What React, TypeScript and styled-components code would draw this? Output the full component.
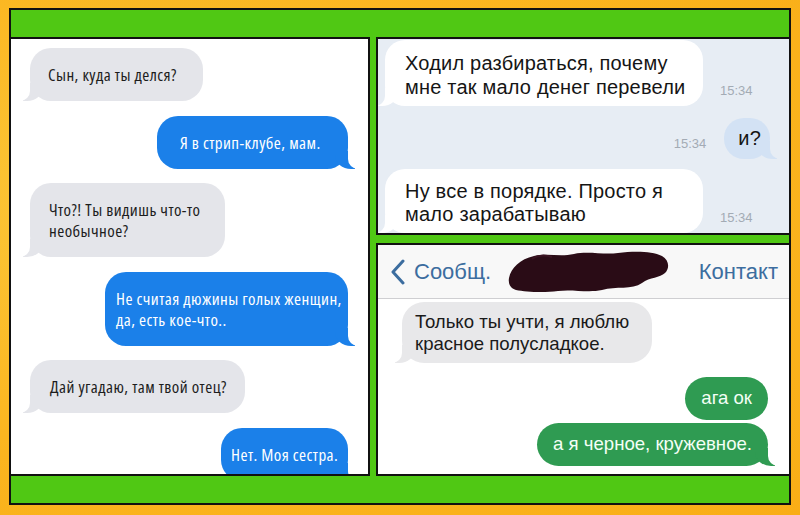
import React from "react";
import styled, { createGlobalStyle, css } from "styled-components";

const Global = createGlobalStyle`
  html, body { margin: 0; padding: 0; }
  body {
    width: 800px;
    height: 515px;
    overflow: hidden;
    background: radial-gradient(ellipse at 20% 40%, #fcc83a 0%, #fbb620 55%, #f9ad16 100%);
  }
  * { box-sizing: border-box; }
`;

type Side = "left" | "right";

const tail = (side: Side, bg: string, canvas: string) => css`
  &::before {
    content: "";
    position: absolute;
    bottom: 0;
    height: 18px;
    width: 20px;
    background: ${bg};
    ${side === "left"
      ? "left: -7px; border-bottom-right-radius: 16px 14px;"
      : "right: -7px; border-bottom-left-radius: 16px 14px;"}
  }
  &::after {
    content: "";
    position: absolute;
    bottom: 0;
    height: 19px;
    width: 10px;
    background: ${canvas};
    ${side === "left"
      ? "left: -10px; border-bottom-right-radius: 10px;"
      : "right: -10px; border-bottom-left-radius: 10px;"}
  }
`;

const Frame = styled.div`
  margin: 8px 0 0 9px;
  width: 782px;
  height: 497px;
  border: 2px solid #111;
  background: #50c814;
  padding: 27px 0;
  display: grid;
  grid-template-columns: 359px 413px;
  column-gap: 6px;
`;

const Panel = styled.section<{ $side: Side; $bg: string }>`
  position: relative;
  overflow: hidden;
  border: 2px solid #111;
  ${(p) => (p.$side === "left" ? "border-left: none;" : "border-right: none;")}
  background: ${(p) => p.$bg};
`;

const RightColumn = styled.div`
  display: grid;
  grid-template-rows: 198px 233px;
  row-gap: 8px;
`;

/* ---------- left panel (iMessage blue/gray) ---------- */

const LeftThread = styled.div`
  height: 100%;
  padding: 9px 20px 0 19px;
  display: flex;
  flex-direction: column;
  gap: 14.5px;
`;

const ChatBubble = styled.div<{ $out?: boolean; $w: number; $pl: number }>`
  position: relative;
  align-self: ${(p) => (p.$out ? "flex-end" : "flex-start")};
  width: ${(p) => p.$w}px;
  padding: 16px 0 16px ${(p) => p.$pl}px;
  border-radius: 21px;
  background: ${(p) => (p.$out ? "#1b80e9" : "#e4e5ea")};
  color: ${(p) => (p.$out ? "#ffffff" : "#1d1d1d")};
  font-family: "Open Sans", "Liberation Sans", sans-serif;
  font-stretch: 75%;
  font-size: 17px;
  letter-spacing: 0.45px;
  line-height: 21px;
  white-space: nowrap;
  ${(p) => tail(p.$out ? "right" : "left", p.$out ? "#1b80e9" : "#e4e5ea", "#ffffff")}
`;

/* ---------- right top panel (VK style) ---------- */

const VkThread = styled.div`
  padding: 1px 19px 0 7px;
  display: flex;
  flex-direction: column;
  font-family: "Liberation Sans", Arial, sans-serif;
`;

const VkRow = styled.div<{ $out?: boolean; $mt: number }>`
  display: flex;
  align-items: flex-end;
  justify-content: ${(p) => (p.$out ? "flex-end" : "flex-start")};
  gap: ${(p) => (p.$out ? 18 : 17)}px;
  margin-top: ${(p) => p.$mt}px;
`;

const VkBubble = styled.div<{ $out?: boolean; $lh: number }>`
  position: relative;
  ${(p) =>
    p.$out
      ? css`
          padding: 8px 9px 9px 14px;
          background: #d3e2f4;
        `
      : css`
          width: 318px;
          padding: 11px 10px 7px 20px;
          background: #ffffff;
        `}
  border-radius: 20px;
  color: #151515;
  font-size: 20px;
  letter-spacing: 0.2px;
  line-height: ${(p) => p.$lh}px;
  white-space: nowrap;
  ${(p) => tail(p.$out ? "right" : "left", p.$out ? "#d3e2f4" : "#ffffff", "#e7edf4")}
`;

const VkTime = styled.span`
  font-size: 13px;
  line-height: 15px;
  color: #a3abb4;
  margin-bottom: 8px;
`;

/* ---------- right bottom panel (SMS) ---------- */

const SmsHeader = styled.header`
  height: 54px;
  display: flex;
  align-items: center;
  padding: 0 11px 0 12px;
  background: #f8f8f8;
  border-bottom: 1px solid #cfcfd2;
  font-family: "Liberation Sans", Arial, sans-serif;
  font-size: 22px;
  color: #3c6d9f;
`;

const BackLink = styled.span`
  display: flex;
  align-items: center;
  gap: 8px;
`;

const Redaction = styled.svg`
  margin-left: 17px;
  display: block;
`;

const ContactLink = styled.span`
  margin-left: auto;
`;

const SmsThread = styled.div`
  padding: 3px 21px 0 24px;
  display: flex;
  flex-direction: column;
  font-family: "Liberation Sans", Arial, sans-serif;
  font-size: 18.6px;
`;

const SmsBubble = styled.div<{ $out?: boolean; $mt: number }>`
  position: relative;
  align-self: ${(p) => (p.$out ? "flex-end" : "flex-start")};
  margin-top: ${(p) => p.$mt}px;
  border-radius: 22px;
  white-space: nowrap;
  ${(p) =>
    p.$out
      ? css`
          padding: 10px 16px 11px 16px;
          line-height: 22px;
          background: #2f9b52;
          color: #f4fff6;
        `
      : css`
          width: 250px;
          padding: 9px 10px 8px 13px;
          line-height: 22px;
          background: #e8e8ea;
          color: #1a1a1a;
        `}
`;

const SmsLastBubble = styled(SmsBubble)`
  ${tail("right", "#2f9b52", "#ffffff")}
`;

const SmsGrayBubble = styled(SmsBubble)`
  ${tail("left", "#e8e8ea", "#ffffff")}
`;

export default function App() {
  return (
    <>
      <Global />
      <Frame>
        <Panel $side="left" $bg="#ffffff">
          <LeftThread>
            <ChatBubble $w={173} $pl={18}>Сын, куда ты делся?</ChatBubble>
            <ChatBubble $out $w={191} $pl={23}>Я в стрип-клубе, мам.</ChatBubble>
            <ChatBubble $w={195} $pl={19}>
              Что?! Ты видишь что-то
              <br />
              необычное?
            </ChatBubble>
            <ChatBubble $out $w={243} $pl={11}>
              Не считая дюжины голых женщин,
              <br />
              да, есть кое-что..
            </ChatBubble>
            <ChatBubble $w={215} $pl={20}>Дай угадаю, там твой отец?</ChatBubble>
            <ChatBubble $out $w={127} $pl={10}>Нет. Моя сестра.</ChatBubble>
          </LeftThread>
        </Panel>

        <RightColumn>
          <Panel $side="right" $bg="#e7edf4">
            <VkThread>
              <VkRow $mt={0}>
                <VkBubble $lh={24}>
                  Ходил разбираться, почему
                  <br />
                  мне так мало денег перевели
                </VkBubble>
                <VkTime>15:34</VkTime>
              </VkRow>
              <VkRow $out $mt={12}>
                <VkTime>15:34</VkTime>
                <VkBubble $out $lh={24}>и?</VkBubble>
              </VkRow>
              <VkRow $mt={10}>
                <VkBubble $lh={23}>
                  Ну все в порядке. Просто я
                  <br />
                  мало зарабатываю
                </VkBubble>
                <VkTime>15:34</VkTime>
              </VkRow>
            </VkThread>
          </Panel>

          <Panel $side="right" $bg="#ffffff">
            <SmsHeader>
              <BackLink>
                <svg width="16" height="26" viewBox="0 0 16 26">
                  <polyline
                    points="13,2 3,13 13,24"
                    fill="none"
                    stroke="#3c6d9f"
                    strokeWidth="3"
                    strokeLinecap="round"
                    strokeLinejoin="round"
                  />
                </svg>
                Сообщ.
              </BackLink>
              <Redaction width="162" height="42" viewBox="0 0 162 42">
                <path
                  d="M1 27 C3 17 12 8 26 5 C40 2 52 6 66 3 C80 0 96 4 110 2 C126 0 144 0 154 5 C161 9 162 17 157 22 C152 27 142 26 134 32 C124 39 108 35 94 39 C80 42 64 38 50 40 C36 42 18 41 8 39 C2 37 0 32 1 27 Z"
                  fill="#2a0c16"
                />
                <path d="M24 8 C30 4 38 4 44 6" stroke="#3a1422" strokeWidth="2" fill="none" />
              </Redaction>
              <ContactLink>Контакт</ContactLink>
            </SmsHeader>
            <SmsThread>
              <SmsGrayBubble $mt={0}>
                Только ты учти, я люблю
                <br />
                красное полусладкое.
              </SmsGrayBubble>
              <SmsBubble $out $mt={14}>ага ок</SmsBubble>
              <SmsLastBubble $out $mt={3}>а я черное, кружевное.</SmsLastBubble>
            </SmsThread>
          </Panel>
        </RightColumn>
      </Frame>
    </>
  );
}
